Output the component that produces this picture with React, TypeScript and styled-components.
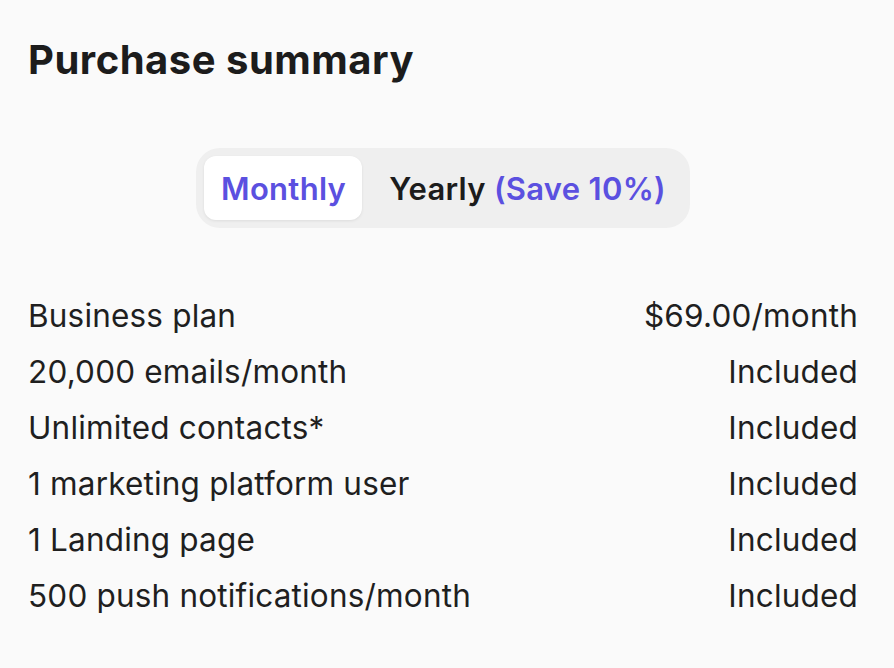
import * as React from "react";
import styled, { createGlobalStyle } from "styled-components";

const GlobalStyle = createGlobalStyle`
  html, body {
    margin: 0;
    background: #fafafa;
  }
  body {
    font-family: "Inter", "Liberation Sans", sans-serif;
    color: #1d1d1f;
    -webkit-font-smoothing: antialiased;
  }
`;

const Panel = styled.div`
  box-sizing: border-box;
  width: 894px;
  min-height: 668px;
  padding: 36px 36px 40px 28px;
  background: #fafafa;
`;

const Heading = styled.h2`
  margin: 0;
  font-size: 40px;
  font-weight: 700;
  letter-spacing: 0.5px;
  line-height: 48px;
  color: #1c1c1c;
`;

const ToggleWrap = styled.div`
  display: flex;
  justify-content: center;
  margin: 64px 0 59px;
`;

const Toggle = styled.div`
  display: flex;
  align-items: center;
  gap: 10px;
  padding: 8px;
  border-radius: 24px;
  background: #efefef;
`;

const Option = styled.button<{ $active?: boolean }>`
  border: 0;
  height: 64px;
  padding: 0 16px 0 17px;
  border-radius: 12px;
  font-family: inherit;
  font-size: 31px;
  font-weight: 600;
  letter-spacing: 0.3px;
  cursor: pointer;
  color: ${(p) => (p.$active ? "#5b50e0" : "#1c1c1c")};
  background: ${(p) => (p.$active ? "#ffffff" : "transparent")};
  box-shadow: ${(p) => (p.$active ? "0 1px 3px rgba(0,0,0,0.08)" : "none")};
`;

const Save = styled.span`
  color: #5b50e0;
`;

const List = styled.div`
  display: flex;
  flex-direction: column;
`;

const Row = styled.div`
  display: flex;
  justify-content: space-between;
  align-items: center;
  height: 56px;
  font-size: 31.5px;
  letter-spacing: 0.18px;
  color: #1f1f1f;
`;

const items: [string, string][] = [
  ["Business plan", "$69.00/month"],
  ["20,000 emails/month", "Included"],
  ["Unlimited contacts*", "Included"],
  ["1 marketing platform user", "Included"],
  ["1 Landing page", "Included"],
  ["500 push notifications/month", "Included"],
];

export default function App() {
  const [yearly, setYearly] = React.useState(false);
  return (
    <>
      <GlobalStyle />
      <Panel>
        <Heading>Purchase summary</Heading>
        <ToggleWrap>
          <Toggle>
            <Option $active={!yearly} onClick={() => setYearly(false)}>
              Monthly
            </Option>
            <Option $active={yearly} onClick={() => setYearly(true)}>
              Yearly <Save>(Save 10%)</Save>
            </Option>
          </Toggle>
        </ToggleWrap>
        <List>
          {items.map(([label, value]) => (
            <Row key={label}>
              <span>{label}</span>
              <span>{value}</span>
            </Row>
          ))}
        </List>
      </Panel>
    </>
  );
}
